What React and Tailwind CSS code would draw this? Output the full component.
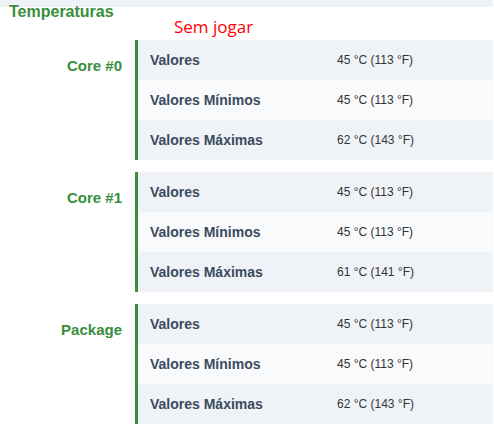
const groups = [
  {
    name: "Core #0",
    rows: [
      ["Valores", "45 °C (113 °F)"],
      ["Valores Mínimos", "45 °C (113 °F)"],
      ["Valores Máximas", "62 °C (143 °F)"],
    ],
  },
  {
    name: "Core #1",
    rows: [
      ["Valores", "45 °C (113 °F)"],
      ["Valores Mínimos", "45 °C (113 °F)"],
      ["Valores Máximas", "61 °C (141 °F)"],
    ],
  },
  {
    name: "Package",
    rows: [
      ["Valores", "45 °C (113 °F)"],
      ["Valores Mínimos", "45 °C (113 °F)"],
      ["Valores Máximas", "62 °C (143 °F)"],
    ],
  },
]

function SensorGroup({ group }) {
  return (
    <div className="flex mb-[12px]">
      <div className="w-[135px] shrink-0 pr-[13px] pt-[16px] text-right text-[15px] leading-5 font-bold text-[#388e3c]">
        {group.name}
      </div>
      <div className="flex-1 border-l-[3px] border-[#388e3c]">
        {group.rows.map(([label, value], i) => (
          <div
            key={label}
            className={
              "flex items-center h-[40px] pl-[12px] " +
              (i % 2 === 0 ? "bg-[#eff3f7]" : "bg-[#f8fafc]")
            }
          >
            <div className="w-[187px] shrink-0 text-[14px] font-bold text-[#3b4a5e]">{label}</div>
            <div className="text-[12px] text-[#333333]">{value}</div>
          </div>
        ))}
      </div>
    </div>
  )
}

export default function App() {
  return (
    <div className="w-[494px] min-h-[427px] bg-white pr-[1px] font-['Liberation_Sans',Arial,sans-serif]">
      <div className="flex h-[40px] bg-[linear-gradient(to_bottom,#eef2f6_7px,#ffffff_7px)]">
        <div className="w-[174px] shrink-0 pl-[9px] pt-[2px] text-[16px] leading-5 font-bold text-[#388e3c]">
          Temperaturas
        </div>
        <div className="mt-[15px] text-[17px] leading-6 text-[#ff0000] font-['Open_Sans',sans-serif]">
          Sem jogar
        </div>
      </div>
      {groups.map((g) => (
        <SensorGroup key={g.name} group={g} />
      ))}
    </div>
  )
}
